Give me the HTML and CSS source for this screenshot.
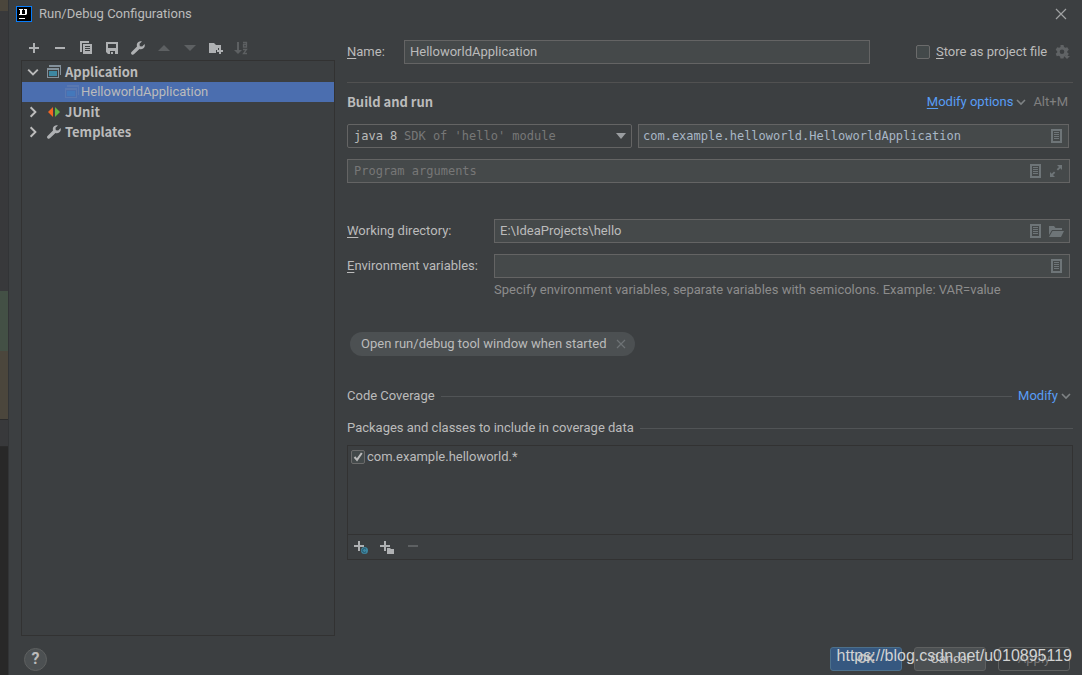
FILE: index.html
```html
<!DOCTYPE html>
<html lang="en">
<head>
<meta charset="utf-8">
<title>Run/Debug Configurations</title>
<link rel="stylesheet" href="styles.css">
</head>
<body>
<svg class="defs" aria-hidden="true">
  <symbol id="plus" viewBox="0 0 16 16"><path d="M7 3h2v4h4v2H9v4H7V9H3V7h4z"/></symbol>
  <symbol id="minus" viewBox="0 0 16 16"><path d="M3 7h10v2H3z"/></symbol>
  <symbol id="wrench" viewBox="0 0 16 16"><path d="M14.6 4.1 12.2 6.500 9.800 6.200 9.500 3.800 11.900 1.400C9.900.7 7.700 1.700 7 3.700 6.700 4.600 6.700 5.500 7 6.400L1.500 11.900C.9 12.500.9 13.500 1.500 14.200 2.200 14.900 3.300 14.900 3.900 14.300L9.500 8.900C11.500 9.700 13.800 8.700 14.600 6.700 14.900 5.800 14.900 4.900 14.600 4.100z"/></symbol>
  <symbol id="doc" viewBox="0 0 16 16"><path fill-rule="evenodd" d="M3 1h11v14H3zM5 3v10h7V3zM6 4h5v1H6zm0 2h5v1H6zm0 2h5v1H6zm0 2h5v1H6z"/></symbol>
  <symbol id="chevron" viewBox="0 0 10 10"><path d="M1 3 5 7 9 3" fill="none" stroke="currentColor" stroke-width="1.600"/></symbol>
</svg>

<div class="screen">
  <div class="editor-edge" aria-hidden="true">
    <span class="edge edge-tab"></span>
    <span class="edge edge-plain"></span>
    <span class="edge edge-green"></span>
    <span class="edge edge-brown"></span>
    <span class="edge edge-bar"></span>
    <span class="edge edge-dark"></span>
  </div>

  <main class="dialog">
    <header class="titlebar">
      <svg class="logo" viewBox="0 0 16 16" aria-hidden="true"><path fill="#087cfa" d="M0 0h16v16H0z"/><path fill="#000" d="M1 1h14v14H1z"/><path fill="#fff" d="M3 3h4v1H6v4h1v1H3V8h1V4H3zM8 3h3v5l-1 1H7V8h2V4H8zM3 12h6v1H3z"/></svg>
      <h1 class="title">Run/Debug Configurations</h1>
      <button class="icon-btn close" aria-label="Close"><svg viewBox="0 0 16 16"><path d="M3 3l10 10M13 3 3 13" stroke="currentColor" stroke-width="1.200"/></svg></button>
    </header>

    <div class="content">
      <section class="side">
        <div class="toolbar">
          <button class="icon-btn" aria-label="Add"><svg><use href="#plus"/></svg></button>
          <button class="icon-btn" aria-label="Remove"><svg><use href="#minus"/></svg></button>
          <button class="icon-btn" aria-label="Copy"><svg viewBox="0 0 16 16"><path fill-rule="evenodd" d="M2 1h9v2H4v9H2zM5 4h9v10H5zM7 6v1h5V6zm0 2v1h5V8zm0 2v1h5v-1z"/></svg></button>
          <button class="icon-btn" aria-label="Save"><svg viewBox="0 0 16 16"><path fill-rule="evenodd" d="M2 2h12v12h-3v-3H6v3H4l-2-2zM4 4v4h8V4zM7 12h2v2H7z"/></svg></button>
          <button class="icon-btn" aria-label="Edit templates"><svg><use href="#wrench"/></svg></button>
          <button class="icon-btn off" aria-label="Move up" disabled><svg viewBox="0 0 16 16"><path d="M2 11h12L8 5z"/></svg></button>
          <button class="icon-btn off" aria-label="Move down" disabled><svg viewBox="0 0 16 16"><path d="M2 5h12l-6 6z"/></svg></button>
          <button class="icon-btn" aria-label="New folder"><svg viewBox="0 0 16 16"><path d="M1 3h5l2 2h5v3h-3v2H8v3H1z"/><path d="M11 8h2v2h2v2h-2v2h-2v-2H9v-2h2z"/></svg></button>
          <button class="icon-btn off" aria-label="Sort" disabled><svg viewBox="0 0 16 16"><path d="M3 2h2v8h3l-4 4-4-4h3z"/><path d="M9 2.500h3.500V7H9.500V4.500h3M9 9.500h3.500L9.500 13.500H13" fill="none" stroke="currentColor" stroke-width="1.300"/></svg></button>
        </div>
        <ul class="tree">
          <li class="node"><svg class="arrow"><use href="#chevron"/></svg><svg class="node-icon" viewBox="0 0 16 16"><path fill="#84919b" d="M3 1h12v10h-1V3H3z"/><path fill="#84919b" fill-rule="evenodd" d="M1 4h12v10H1zM2 6v7h10V6z"/><path fill="#3d87a1" d="M3 7h8v5H3z"/></svg>Application</li>
          <li class="node child selected"><svg class="node-icon" viewBox="0 0 16 16"><path fill="#5a78b0" d="M3 1h12v10h-1V3H3z"/><path fill="#5a78b0" fill-rule="evenodd" d="M1 4h12v10H1zM2 6v7h10V6z"/><path fill="#4478bb" d="M3 7h8v5H3z"/></svg>HelloworldApplication</li>
          <li class="node"><svg class="arrow closed"><use href="#chevron"/></svg><svg class="node-icon" viewBox="0 0 16 16"><path fill="#f26522" d="M7 3v10L2 8z"/><path fill="#62b543" d="M9 3v10l5-5z"/></svg>JUnit</li>
          <li class="node"><svg class="arrow closed"><use href="#chevron"/></svg><svg class="node-icon"><use href="#wrench"/></svg>Templates</li>
        </ul>
      </section>

      <form class="form">
        <div class="name-row">
          <label class="name-label" for="name"><u>N</u>ame:</label>
          <div class="field name-field"><input id="name" value="HelloworldApplication"></div>
          <div class="store">
            <input class="check" type="checkbox" id="store"><label for="store"><u>S</u>tore as project file</label>
            <button type="button" class="icon-btn gear" aria-label="Storage settings"><svg viewBox="0 0 16 16"><path fill-rule="evenodd" d="M5.500 1h3l.5 2 1.300.8 2-.6 1.500 2.600-1.500 1.400v1.200l1.500 1.300-1.500 2.600-2-.6-1.300.8-.5 2h-3l-.5-2-1.300-.8-2 .6L.7 9.700l1.500-1.300V7.200L.7 5.800l1.500-2.600 2 .6L5.500 3zM7 5.500a2.300 2.300 0 100 4.600 2.300 2.300 0 000-4.600z"/><path d="M9 12h6l-3 3z"/></svg></button>
          </div>
        </div>

        <div class="section-head">
          <h2 class="heading">Build and run</h2>
          <a class="link" href="#"><u>M</u>odify options</a><svg class="caret"><use href="#chevron"/></svg><span class="shortcut">Alt+M</span>
        </div>

        <div class="run-row">
          <div class="combo">
            <select class="mono" aria-label="Java version"><option>java 8</option></select>
            <span class="combo-hint mono">SDK of 'hello' module</span>
            <svg class="combo-arrow" viewBox="0 0 10 6"><path d="M0 0h10L5 6z"/></svg>
          </div>
          <div class="field"><input class="mono code" aria-label="Main class" value="com.example.helloworld.HelloworldApplication"><button type="button" class="icon-btn" aria-label="Browse classes"><svg><use href="#doc"/></svg></button></div>
        </div>
        <div class="field args"><input class="mono" aria-label="Program arguments" placeholder="Program arguments"><button type="button" class="icon-btn" aria-label="Insert macro"><svg><use href="#doc"/></svg></button><button type="button" class="icon-btn" aria-label="Expand"><svg viewBox="0 0 16 16"><path d="M9 2h5v5l-1.700-1.700-2.300 2.300-1.300-1.300 2.300-2.300zM7 14H2V9l1.700 1.700L6 8.400l1.300 1.300-2.300 2.300z"/></svg></button></div>

        <div class="grid">
          <label for="dir"><u>W</u>orking directory:</label>
          <div class="field"><input id="dir" value="E:\IdeaProjects\hello"><button type="button" class="icon-btn" aria-label="Insert macro"><svg><use href="#doc"/></svg></button><button type="button" class="icon-btn" aria-label="Browse folders"><svg viewBox="0 0 16 16"><path d="M1 3h5l1.500 2H14v2H4L1 12z"/><path d="M4.500 8H16l-3 6H1z"/></svg></button></div>
          <label for="env"><u>E</u>nvironment variables:</label>
          <div class="field"><input id="env"><button type="button" class="icon-btn" aria-label="Edit environment variables"><svg><use href="#doc"/></svg></button></div>
        </div>
        <p class="hint">Specify environment variables, separate variables with semicolons. Example: VAR=value</p>

        <div class="tag">Open run/debug tool window when started<button type="button" class="tag-close" aria-label="Remove option"><svg viewBox="0 0 10 10"><path d="M1 1l8 8M9 1 1 9" stroke="currentColor" stroke-width="1.200"/></svg></button></div>

        <div class="rule-row coverage"><span>Code Coverage</span><span class="rule"></span><a class="link" href="#">Modify</a><svg class="caret"><use href="#chevron"/></svg></div>
        <div class="rule-row packages"><span>Packages and classes to include in coverage data</span><span class="rule"></span></div>

        <div class="list">
          <div class="list-body"><label class="list-item"><input class="check" type="checkbox" checked>com.example.helloworld.*</label></div>
          <div class="list-tools">
            <button type="button" class="icon-btn" aria-label="Add class"><svg viewBox="0 0 16 16"><path d="M6 2h2v4h4v2H8v4H6V8H2V6h4z"/><circle cx="12.500" cy="11.500" r="3.500" fill="#3e86a0"/><path d="M14 10.300a2 2 0 100 2.400" fill="none" stroke="#25566a"/></svg></button>
            <button type="button" class="icon-btn" aria-label="Add package"><svg viewBox="0 0 16 16"><path d="M6 2h2v4h4v2H8v4H6V8H2V6h4z"/><path d="M9 9h3l1 1h3v5H9z"/></svg></button>
            <button type="button" class="icon-btn off" aria-label="Remove" disabled><svg viewBox="0 0 16 16"><path d="M4 6h10v2H4z"/></svg></button>
          </div>
        </div>
      </form>
    </div>

    <footer class="footer">
      <button class="help" aria-label="Help">?</button>
      <button class="btn primary">OK</button>
      <button class="btn">Cancel</button>
      <button class="btn disabled" disabled>Apply</button>
      <span class="watermark">https://blog.csdn.net/u010895119</span>
    </footer>
  </main>
</div>
</body>
</html>
```
FILE: styles.css
```css
* { box-sizing: border-box; }
body {
  margin: 0;
  background: #3c3f41;
  color: #bbbbbb;
  font: 13px/20px Roboto, "Noto Sans", sans-serif;
}
button, input, select { font: inherit; color: inherit; }
button { padding: 0; border: 0; background: none; }
svg { display: block; width: 16px; height: 16px; fill: currentColor; flex: none; }
u { text-underline-offset: 2px; }
.defs { position: absolute; width: 0; height: 0; }
.mono { font-family: "DejaVu Sans Mono", "Liberation Mono", monospace; font-size: 12px; }

.screen { display: flex; min-height: 100vh; }
.editor-edge { width: 9px; display: flex; flex-direction: column; flex: none; border-right: 1px solid #323436; }
.edge-tab { height: 11px; background: #4b463c; }
.edge-plain { height: 280px; background: #38393b; }
.edge-green { height: 60px; background: #435045; }
.edge-brown { height: 68px; background: #4b463c; }
.edge-bar { height: 28px; background: #38393b; border-top: 1px solid #2b2b2b; border-bottom: 1px solid #2b2b2b; }
.edge-dark { flex: 1; background: #282828; }

.dialog { flex: 1; min-width: 0; display: flex; flex-direction: column; }
.titlebar { display: flex; align-items: center; gap: 7px; height: 28px; padding: 0 13px 0 7px; }
.title { flex: 1; margin: 0; font-size: 13px; font-weight: 400; }
.icon-btn { display: flex; flex: none; color: #afb1b3; }
.close { color: #a0a2a3; }
.off { color: #5d6062; }

.content { flex: 1; display: grid; grid-template-columns: minmax(200px, 314px) minmax(0, 1fr); gap: 12px; padding: 0 9px 0 12px; }
.side { display: flex; flex-direction: column; }
.toolbar { display: flex; gap: 10px; align-items: center; height: 32px; padding: 8px 5px 0; }
.tree { flex: 1; margin: 0; padding: 1px 0; border: 1px solid #323232; list-style: none; }
.node { display: flex; align-items: center; height: 20px; padding-left: 5px; font-weight: 700; }
.node, .heading { font-family: "Noto Sans CJK SC", "Noto Sans", sans-serif; line-height: 18px; }
.arrow { width: 12px; height: 12px; margin-right: 7px; }
.closed { transform: rotate(-90deg); }
.node-icon { margin-right: 3px; color: #afb1b3; }
.child { padding-left: 42px; font-family: inherit; font-weight: 400; }
.child .node-icon { margin-right: 1px; }
.selected { background: #4b6eaf; }

.form { display: flex; flex-direction: column; padding-top: 12px; }
.field { display: flex; align-items: center; gap: 5px; height: 24px; padding: 0 5px; border: 1px solid #646464; background: #45494a; min-width: 0; }
.field input { flex: 1; min-width: 0; height: 20px; padding: 0; border: 0; outline: 0; background: none; }
.field input::placeholder { color: #777777; opacity: 1; }
.field .icon-btn { color: #6e7578; }
.code { color: #a9b7c6; }
.run-row .field { padding: 0 4px; }

.name-row { display: flex; align-items: center; padding-bottom: 18px; border-bottom: 1px solid #515151; }
.name-label { width: 57px; }
.name-field { flex: 1; }
.store { display: flex; align-items: center; margin-left: 46px; }
.store .check { margin-right: 6px; }
.store label { min-width: 115px; }
.gear { margin-left: 4px; margin-right: 2px; color: #606365; }
.check { appearance: none; flex: none; width: 14px; height: 14px; margin: 0; border: 1px solid #6b6b6b; border-radius: 2px; background: #43494a; }
.check:checked {
  background-image: url("data:image/svg+xml,%3Csvg xmlns='http://www.w3.org/2000/svg' viewBox='0 0 12 12'%3E%3Cpath d='M2.500 6 5 8.800 9.800 2' fill='none' stroke='%23bbb' stroke-width='2'/%3E%3C/svg%3E");
}

.section-head { display: flex; align-items: center; padding: 9px 5px 12px 0; }
.heading { flex: 1; margin: 0; font-size: 13px; line-height: 20px; font-weight: 700; }
.link { color: #589df6; text-decoration: none; }
.caret { width: 10px; height: 10px; margin-left: 3px; color: #7e8284; }
.shortcut { margin-left: 7px; color: #808080; }

.run-row { display: grid; grid-template-columns: 285fr 431fr; gap: 6px; padding-right: 4px; margin-bottom: 11px; }
.args, .grid { margin-right: 3px; }
.field.args { padding-left: 6px; }
.combo { display: grid; grid-template-columns: 56px 1fr 10px; align-items: center; padding-right: 5px; border: 1px solid #646464; border-radius: 2px; }
.combo select { grid-area: 1 / 1 / 2 / 4; height: 22px; padding: 0 6px; border: 0; appearance: none; background: none; }
.combo-hint { grid-area: 1 / 2; color: #777777; pointer-events: none; }
.combo-arrow { grid-area: 1 / 3; width: 10px; height: 6px; color: #9a9da0; pointer-events: none; }

.grid { display: grid; grid-template-columns: 147px minmax(0, 1fr); row-gap: 11px; align-items: center; margin-top: 36px; }
.hint { margin: 2px 0 0 147px; color: #8c8c8c; }

.tag { display: flex; align-items: center; align-self: flex-start; gap: 9px; height: 24px; margin: 32px 0 0 3px; padding: 0 9px 0 11px; border-radius: 12px; background: #4c5052; }
.tag-close { color: #6e7275; }
.tag-close svg { width: 10px; height: 10px; }

.rule-row { display: flex; align-items: center; gap: 6px; }
.rule { flex: 1; height: 1px; background: #515456; }
.coverage { margin-top: 30px; padding-right: 2px; }
.coverage .caret { margin-left: -3px; }
.packages { margin-top: 12px; }

.list { margin-top: 7px; border: 1px solid #323232; }
.list-body { min-height: 88px; padding: 1px 3px; }
.list-item { display: flex; align-items: center; gap: 2px; }
.list-tools { display: flex; gap: 10px; padding: 4px; border-top: 1px solid #323232; }

.footer { position: relative; display: flex; align-items: center; gap: 12px; padding: 11px 12px 4px 15px; }
.help { width: 23px; height: 23px; margin-right: auto; border: 1px solid #5e6060; border-radius: 50%; background: #4c5052; font-size: 16px; line-height: 20px; font-weight: 700; }
.btn { width: 72px; height: 24px; border: 1px solid #5e6060; border-radius: 3px; background: #4c5052; }
.primary { border-color: #4c708c; background: #365880; font-weight: 700; }
.disabled { background: none; color: #777777; }
.watermark { position: absolute; right: 10px; top: 10px; font: 16px/20px "Liberation Sans", Arial, sans-serif; color: #d2d3d3; pointer-events: none; }
```
